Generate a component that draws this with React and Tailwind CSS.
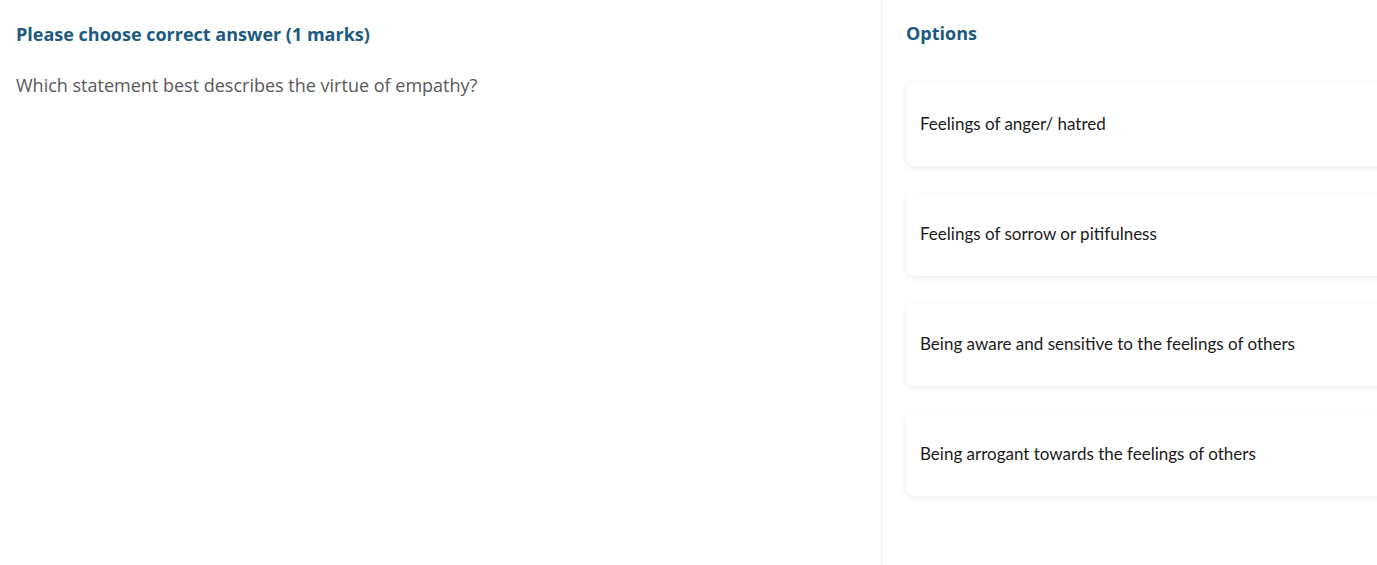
const options = [
  'Feelings of anger/ hatred',
  'Feelings of sorrow or pitifulness',
  'Being aware and sensitive to the feelings of others',
  'Being arrogant towards the feelings of others',
];

export default function App() {
  return (
    <div className="flex h-[565px] w-[1377px] overflow-hidden bg-white">
      <div className="w-[882px] shrink-0 border-r border-[#f0f0f0] px-4 pt-[22px] font-['Open_Sans',sans-serif]">
        <h2 className="text-[18px] font-bold leading-[25px] text-[#1b5a7e]">Please choose correct answer (1 marks)</h2>
        <p className="mt-[26px] text-[18px] leading-[25px] text-[#595959]">Which statement best describes the virtue of empathy?</p>
      </div>

      <div className="w-[520px] shrink-0 pl-6 pt-[21px]">
        <h3 className="font-['Open_Sans',sans-serif] text-[18px] font-bold leading-[25px] text-[#1b5a7e]">Options</h3>
        <div className="mt-[37px] flex flex-col gap-[27px]">
          {options.map((opt, idx) => (
            <div
              key={idx}
              className="flex h-[83px] items-center rounded-lg bg-white pb-[2px] pl-[14px] font-['Lato',sans-serif] text-[17px] text-[#1a1a1a] shadow-[0_2px_6px_rgba(0,0,0,0.08)]"
            >
              {opt}
            </div>
          ))}
        </div>
      </div>
    </div>
  );
}
